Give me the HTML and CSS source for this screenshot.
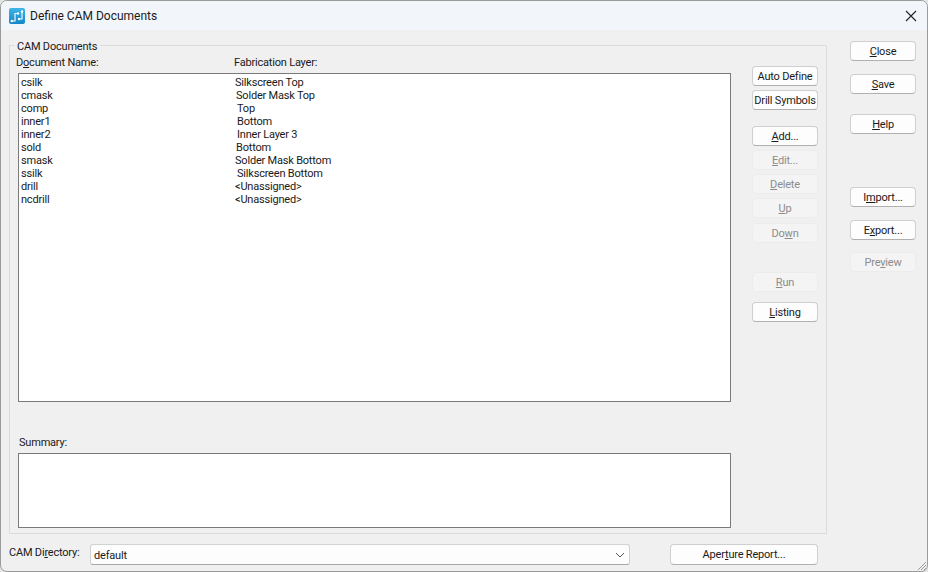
FILE: index.html
```html
<!DOCTYPE html>
<html lang="en">
<head>
  <meta charset="UTF-8">
  <meta name="viewport" content="width=device-width, initial-scale=1.0">
  <title>Define CAM Documents</title>
  <link rel="stylesheet" href="styles.css">
</head>
<body>
  <div class="window">
    <!-- title bar -->
    <div class="titlebar">
      <svg class="app-icon" width="16" height="16" viewBox="0 0 16 16">
        <defs>
          <linearGradient id="iconFill" x1="0" y1="0" x2="0" y2="1">
            <stop offset="0" stop-color="#3fb4e6"/>
            <stop offset="1" stop-color="#1487c9"/>
          </linearGradient>
        </defs>
        <rect width="16" height="16" rx="2" fill="url(#iconFill)"/>
        <path d="M2.5 13H6V5.5H9M13 3.5V11H10" fill="none" stroke="#fff" stroke-width="1.1"/>
        <circle cx="2.8" cy="13" r="1.2" fill="#fff"/>
        <circle cx="9" cy="5.5" r="1.2" fill="#fff"/>
        <circle cx="10" cy="11" r="1.2" fill="#fff"/>
        <circle cx="13" cy="3.5" r="1.2" fill="#fff"/>
      </svg>
      <span class="window-title">Define CAM Documents</span>
      <svg class="close-icon" width="12" height="12" viewBox="0 0 12 12">
        <path d="M1 1l10 10M11 1L1 11" stroke="#222" stroke-width="1.1" fill="none"/>
      </svg>
    </div>

    <div class="dialog">
      <div class="main">
        <div class="group">
          <span class="legend">CAM Documents</span>
          <div class="list-area">
            <div class="col-heads">
              <span class="col-name">D<u>o</u>cument Name:</span>
              <span>Fabrication Layer:</span>
            </div>
            <div class="listbox">
              <div class="row"><span class="col-name">csilk</span><span class="layer">Silkscreen Top</span></div>
              <div class="row"><span class="col-name">cmask</span><span class="layer shift-1">Solder Mask Top</span></div>
              <div class="row"><span class="col-name">comp</span><span class="layer shift-2">Top</span></div>
              <div class="row"><span class="col-name">inner1</span><span class="layer shift-2">Bottom</span></div>
              <div class="row"><span class="col-name">inner2</span><span class="layer shift-2">Inner Layer 3</span></div>
              <div class="row"><span class="col-name">sold</span><span class="layer shift-1">Bottom</span></div>
              <div class="row"><span class="col-name">smask</span><span class="layer">Solder Mask Bottom</span></div>
              <div class="row"><span class="col-name">ssilk</span><span class="layer shift-2">Silkscreen Bottom</span></div>
              <div class="row"><span class="col-name">drill</span><span class="layer">&lt;Unassigned&gt;</span></div>
              <div class="row"><span class="col-name">ncdrill</span><span class="layer">&lt;Unassigned&gt;</span></div>
            </div>
            <div class="summary-label">Summary:</div>
            <div class="summary"></div>
          </div>

          <div class="mid-buttons">
            <button class="btn">Auto Define</button>
            <button class="btn gap-4">Drill Symbols</button>
            <button class="btn gap-16"><u>A</u>dd...</button>
            <button class="btn gap-4" disabled><u>E</u>dit...</button>
            <button class="btn gap-4" disabled><u>D</u>elete</button>
            <button class="btn gap-4" disabled><u>U</u>p</button>
            <button class="btn gap-5" disabled>Do<u>w</u>n</button>
            <button class="btn gap-29" disabled><u>R</u>un</button>
            <button class="btn gap-10"><u>L</u>isting</button>
          </div>
        </div>

        <div class="bottom-row">
          <label class="dir-label">CAM Di<u>r</u>ectory:</label>
          <div class="combo">
            <span>default</span>
            <svg width="10" height="6" viewBox="0 0 10 6"><path d="M1 1l4 4 4-4" fill="none" stroke="#555"/></svg>
          </div>
          <button class="btn report-btn">Aper<u>t</u>ure Report...</button>
        </div>
      </div>

      <div class="side-buttons">
        <button class="btn"><u>C</u>lose</button>
        <button class="btn gap-13"><u>S</u>ave</button>
        <button class="btn gap-20"><u>H</u>elp</button>
        <button class="btn gap-53">I<u>m</u>port...</button>
        <button class="btn gap-13">E<u>x</u>port...</button>
        <button class="btn gap-12" disabled>Pre<u>v</u>iew</button>
      </div>
    </div>

    <svg class="grip" width="12" height="12" viewBox="0 0 12 12">
      <path d="M11 3l-8 8M11 6l-5 5M11 9l-2 2" stroke="#999" fill="none"/>
    </svg>
  </div>
</body>
</html>
```

FILE: styles.css
```css
* {
  box-sizing: border-box;
}

body {
  margin: 0;
  width: 928px;
  height: 572px;
  overflow: hidden;
  background: #e4e4e4;
  color: #1a1a1a;
  font-family: Roboto, "Liberation Sans", sans-serif;
  font-size: 11px;
  letter-spacing: -0.2px;
}

.window {
  position: relative;
  width: 928px;
  height: 572px;
  background: #f0f0f0;
  border: 1px solid #9b9b9b;
  border-radius: 7px;
  overflow: hidden;
}

.titlebar {
  display: flex;
  align-items: center;
  height: 29px;
  padding: 0 10px 0 8px;
  background: #f2f6fa;
}

.app-icon {
  flex: none;
}

.window-title {
  margin-left: 5px;
  font-size: 12px;
  letter-spacing: 0;
}

.close-icon {
  margin-left: auto;
}

.dialog {
  display: flex;
  padding-top: 15px;
}

.main {
  width: 826px;
  padding-left: 8px;
}

/* group box */
.group {
  position: relative;
  display: flex;
  width: 818px;
  height: 489px;
  border: 1px solid #dcdcdc;
}

.legend {
  position: absolute;
  top: -6px;
  left: 4px;
  padding: 0 3px;
  background: #f0f0f0;
}

.list-area {
  width: 722px;
  padding: 9px 0 0 8px;
}

.col-heads {
  display: flex;
  height: 18px;
  margin-left: -2px;
  line-height: 15px;
}

.col-heads .col-name {
  width: 218px;
}

.listbox {
  width: 713px;
  height: 329px;
  padding: 2px 0 0 2px;
  background: #fff;
  border: 1px solid #7a7a7a;
}

.row {
  display: flex;
  height: 13px;
  line-height: 13px;
}

.col-name {
  width: 214px;
}

.shift-1 {
  margin-left: 1px;
}

.shift-2 {
  margin-left: 2px;
}

.summary-label {
  height: 16px;
  margin-top: 33px;
  margin-left: 1px;
  line-height: 15px;
}

.summary {
  width: 713px;
  height: 75px;
  margin-top: 2px;
  background: #fff;
  border: 1px solid #7a7a7a;
}

.mid-buttons {
  display: flex;
  flex-direction: column;
  width: 66px;
  margin-left: 20px;
  padding-top: 20px;
}

.btn {
  flex: none;
  width: 100%;
  height: 20px;
  padding: 1px 0 0;
  background: #fdfdfd;
  border: 1px solid #cfcfcf;
  border-bottom-color: #b0b0b0;
  border-radius: 4px;
  color: #1a1a1a;
  font-family: inherit;
  font-size: 11px;
  letter-spacing: -0.2px;
  line-height: 16px;
  white-space: nowrap;
}

.btn:disabled {
  background: #f4f4f4;
  border-color: #ececec;
  color: #8c8c8c;
}

.gap-4 {
  margin-top: 4px;
}

.gap-5 {
  margin-top: 5px;
}

.gap-10 {
  margin-top: 10px;
}

.gap-12 {
  margin-top: 12px;
}

.gap-13 {
  margin-top: 13px;
}

.gap-16 {
  margin-top: 16px;
}

.gap-20 {
  margin-top: 20px;
}

.gap-29 {
  margin-top: 29px;
}

.gap-53 {
  margin-top: 53px;
}

.bottom-row {
  display: flex;
  align-items: center;
  height: 22px;
  margin-top: 9px;
}

.dir-label {
  width: 81px;
  margin-top: -3px;
}

.combo {
  display: flex;
  align-items: center;
  justify-content: space-between;
  width: 540px;
  height: 21px;
  padding: 2px 4px 0 3px;
  background: #fdfdfd;
  border: 1px solid #d2d2d2;
  border-bottom-color: #a8a8a8;
  border-radius: 3px;
}

.report-btn {
  width: 148px;
  height: 21px;
  margin-left: 40px;
}

.side-buttons {
  display: flex;
  flex-direction: column;
  width: 66px;
  margin-left: 23px;
  margin-top: -4px;
}

.grip {
  position: absolute;
  right: 0;
  bottom: 0;
}
```
